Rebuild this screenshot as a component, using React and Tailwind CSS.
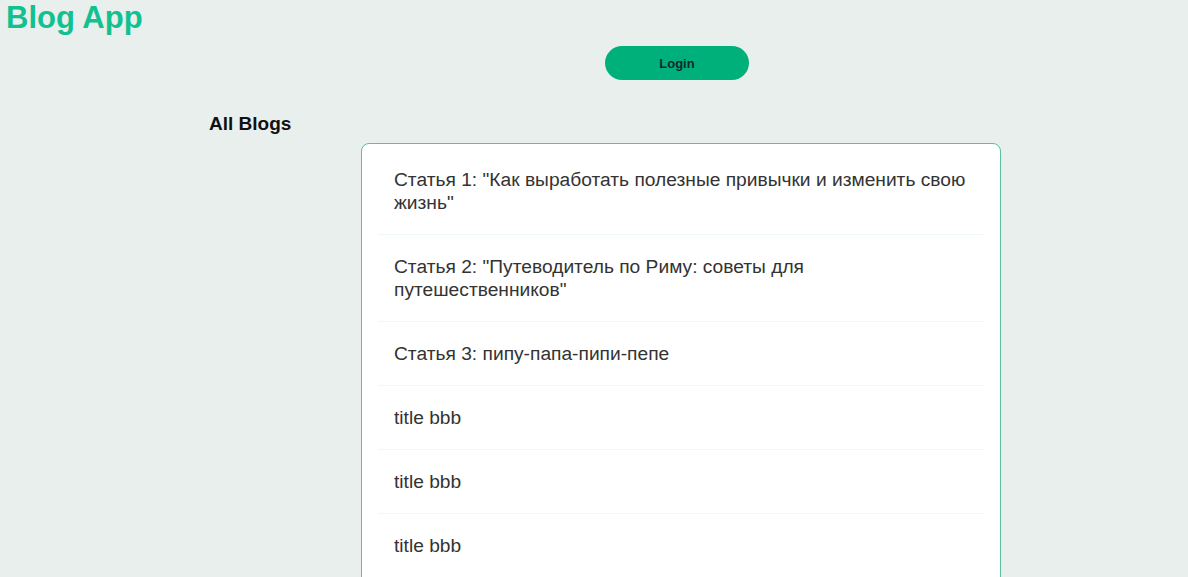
import React from 'react';

const blogs = [
    'Статья 1: "Как выработать полезные привычки и изменить свою жизнь"',
    'Статья 2: "Путеводитель по Риму: советы для путешественников"',
    'Статья 3: пипу-папа-пипи-пепе',
    'title bbb',
    'title bbb',
    'title bbb',
    'title bbb',
];

const App = () => {
    return (
        <div className="min-h-screen bg-[#e9efed] font-['Liberation_Sans',Arial,sans-serif] pb-10">
            {/* Header */}
            <h1 className="ml-[6px] text-[31px] font-bold text-[#11c190] leading-[36px]">Blog App</h1>

            <div className="mt-[10px] ml-[605px]">
                <button className="w-[144px] h-[34px] rounded-full bg-[#00b07b] text-[13px] font-bold text-[#15282a] pt-px">
                    Login
                </button>
            </div>

            {/* Blog list */}
            <h3 className="mt-[33px] ml-[209px] text-[19px] font-bold text-[#111] leading-[22px]">All Blogs</h3>

            <div className="mt-[8px] ml-[361px] w-[640px] bg-white border border-[#5cc29b] rounded-lg pt-[4px] px-4">
                {blogs.map((title, i) => (
                    <div key={i} className="px-4 py-5 border-b border-[#eefaf6] text-[19.2px] leading-[1.2] text-[#333]">
                        {title}
                    </div>
                ))}
            </div>
        </div>
    );
};

export default App;
